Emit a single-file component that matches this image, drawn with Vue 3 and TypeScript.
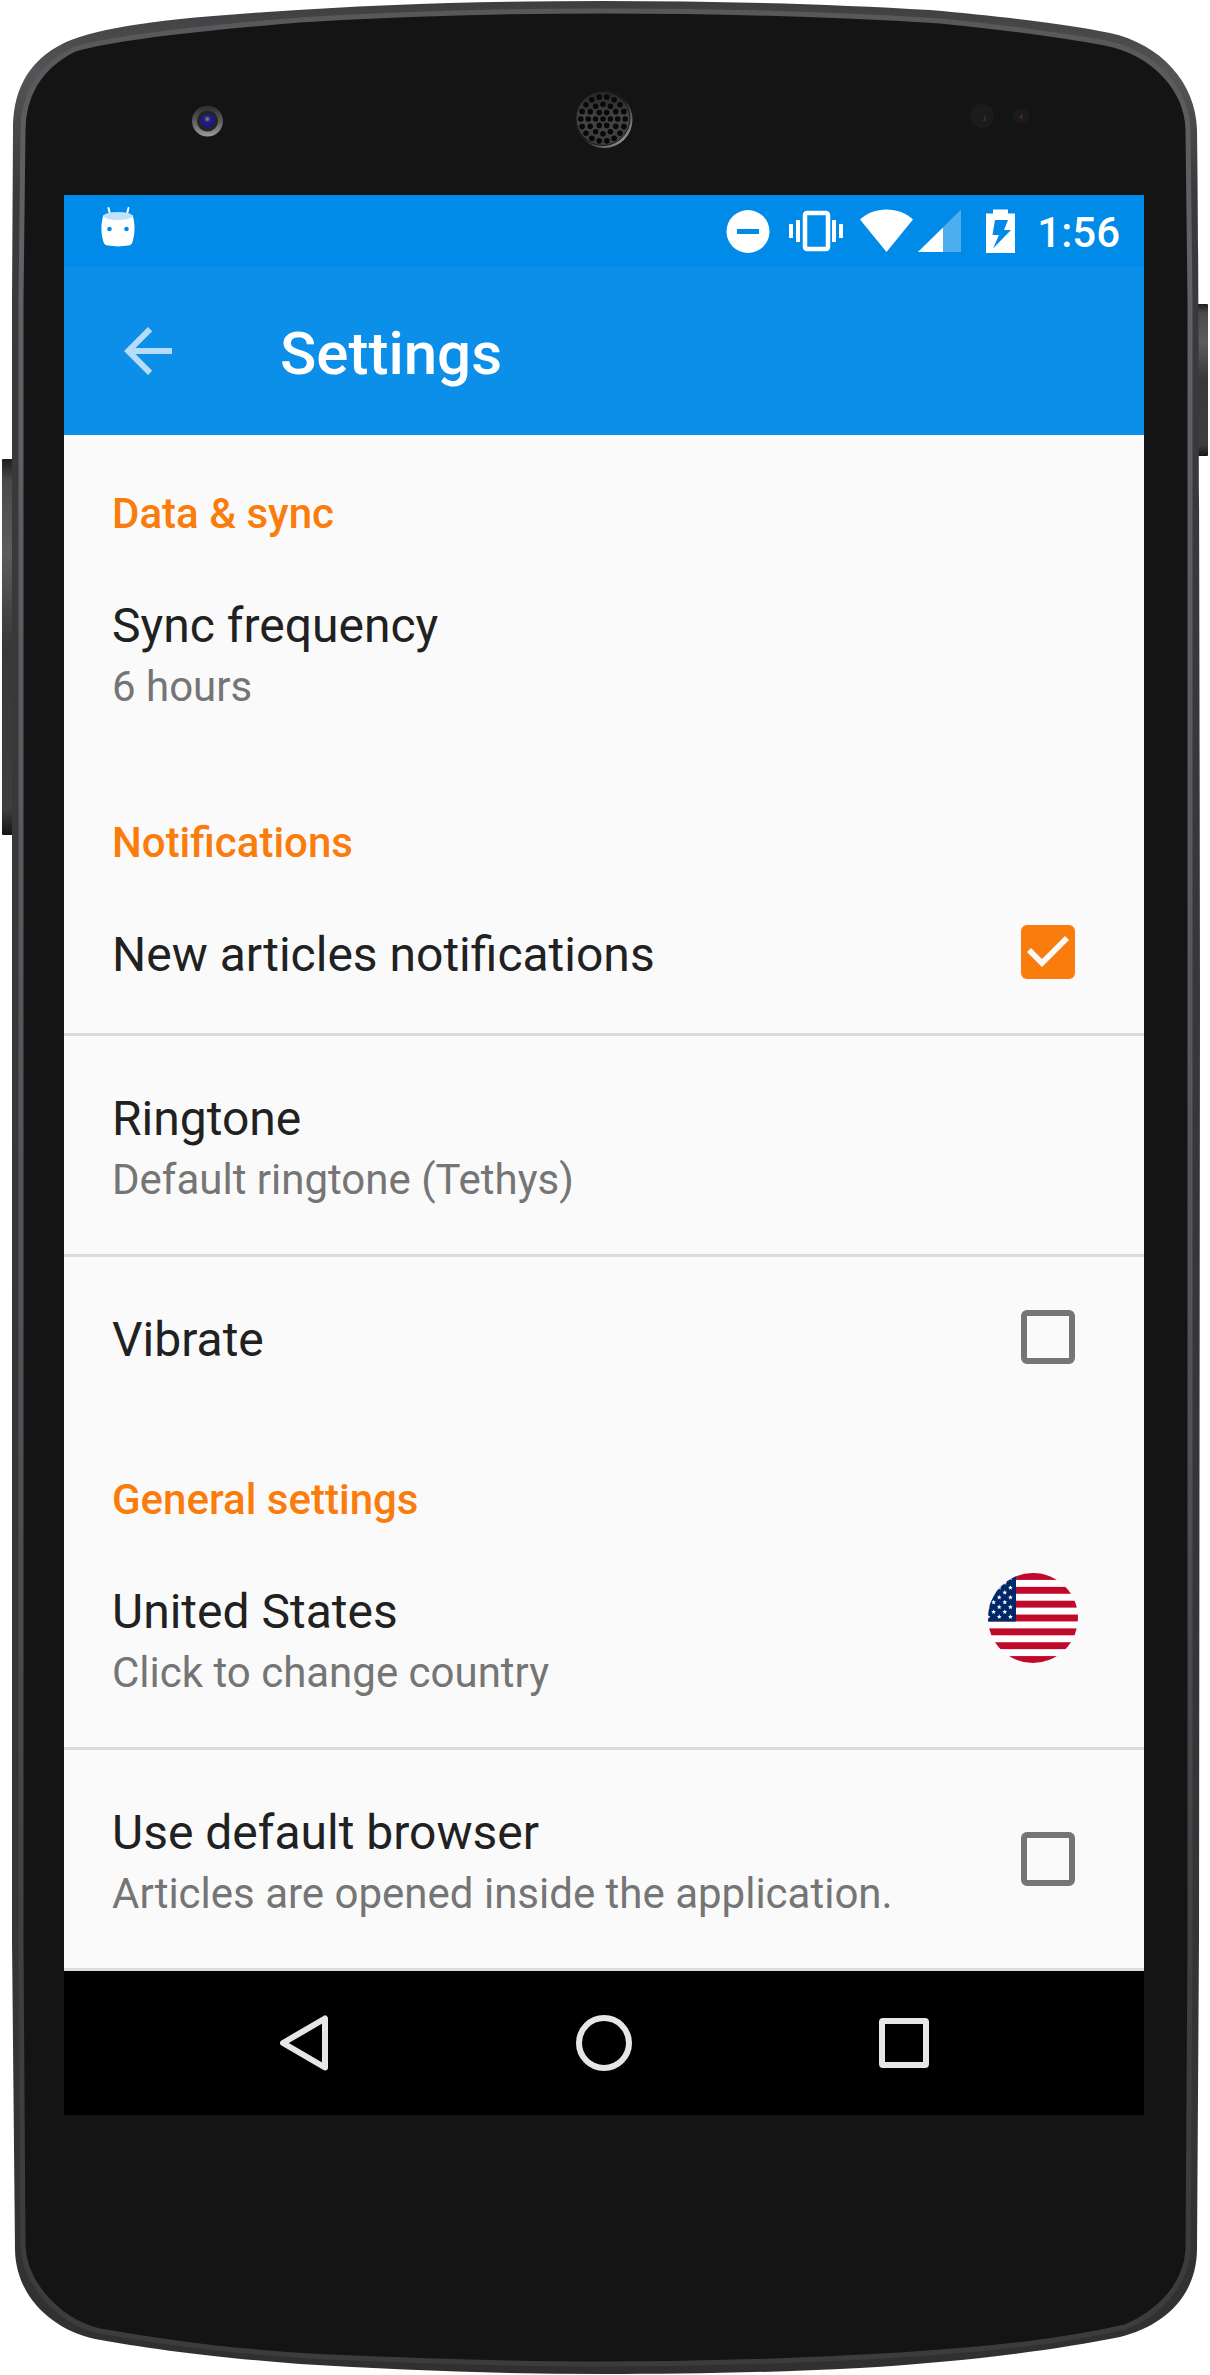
<script setup lang="ts">
import { reactive } from 'vue'

type RowKind = 'plain' | 'toggle' | 'country'

interface SettingRow {
  id: string
  kind: RowKind
  title: string
  summary?: string
}

interface SettingGroup {
  heading: string
  rows: SettingRow[]
}

const groups: SettingGroup[] = [
  {
    heading: 'Data & sync',
    rows: [{ id: 'sync', kind: 'plain', title: 'Sync frequency', summary: '6 hours' }],
  },
  {
    heading: 'Notifications',
    rows: [
      { id: 'articles', kind: 'toggle', title: 'New articles notifications' },
      { id: 'ringtone', kind: 'plain', title: 'Ringtone', summary: 'Default ringtone (Tethys)' },
      { id: 'vibrate', kind: 'toggle', title: 'Vibrate' },
    ],
  },
  {
    heading: 'General settings',
    rows: [
      { id: 'country', kind: 'country', title: 'United States', summary: 'Click to change country' },
      {
        id: 'browser',
        kind: 'toggle',
        title: 'Use default browser',
        summary: 'Articles are opened inside the application.',
      },
    ],
  },
]

const checked = reactive<Record<string, boolean>>({ articles: true, vibrate: false, browser: false })

interface Point {
  x: number
  y: number
}

// Speaker grille: one hole in the middle and three rings around it.
const holes: Point[] = [{ x: 603, y: 119 }]
const rings = [
  { count: 6, radius: 7.4 },
  { count: 12, radius: 14.7 },
  { count: 18, radius: 22.2 },
]
for (const ring of rings) {
  for (let i = 0; i < ring.count; i++) {
    const a = (i / ring.count) * Math.PI * 2
    holes.push({ x: 603 + Math.cos(a) * ring.radius, y: 119 + Math.sin(a) * ring.radius })
  }
}

function starPath(cx: number, cy: number, r: number): string {
  const pts: string[] = []
  for (let i = 0; i < 10; i++) {
    const a = (i / 10) * Math.PI * 2 - Math.PI / 2
    const d = i % 2 === 0 ? r : r * 0.45
    pts.push(`${(cx + Math.cos(a) * d).toFixed(2)},${(cy + Math.sin(a) * d).toFixed(2)}`)
  }
  return `M${pts.join('L')}Z`
}

const stars: string[] = []
for (let row = 0; row < 9; row++) {
  for (let col = 0; col < 3; col++) {
    const x = (row % 2 === 0 ? 22.4 : 16.8) - col * 11.2
    stars.push(starPath(x, 5 + row * 4.85, 2.5))
  }
}
const stripes = [0, 2, 4, 6, 8, 10, 12].map((n) => (n * 90) / 13)
</script>

<template>
  <div class="phone">
    <svg class="frame" viewBox="0 0 1210 2375" preserveAspectRatio="none" aria-hidden="true">
      <defs>
        <linearGradient id="edge" x1="0" y1="0" x2="0" y2="1">
          <stop offset="0" stop-color="#3e3e40" />
          <stop offset="0.03" stop-color="#555557" />
          <stop offset="0.08" stop-color="#3a3a3c" />
          <stop offset="0.9" stop-color="#343436" />
          <stop offset="1" stop-color="#303032" />
        </linearGradient>
        <linearGradient id="rim" x1="0" y1="0" x2="0" y2="1">
          <stop offset="0" stop-color="#58585b" />
          <stop offset="0.1" stop-color="#626266" />
          <stop offset="0.6" stop-color="#525256" />
          <stop offset="0.85" stop-color="#3e3e41" />
          <stop offset="1" stop-color="#3c3c3e" />
        </linearGradient>
        <linearGradient id="key" x1="0" y1="0" x2="0" y2="1">
          <stop offset="0" stop-color="#1e1e1e" />
          <stop offset="0.06" stop-color="#4a4a4a" />
          <stop offset="0.25" stop-color="#5c5c5c" />
          <stop offset="0.5" stop-color="#383838" />
          <stop offset="0.93" stop-color="#3e3e3e" />
          <stop offset="1" stop-color="#151515" />
        </linearGradient>
        <linearGradient id="lens-ring" x1="0" y1="0" x2="0" y2="1">
          <stop offset="0" stop-color="#2b2b2b" />
          <stop offset="0.5" stop-color="#5c5c5c" />
          <stop offset="1" stop-color="#9a9a98" />
        </linearGradient>
        <radialGradient id="lens" cx="0.45" cy="0.4" r="0.6">
          <stop offset="0" stop-color="#7f8ea3" />
          <stop offset="0.4" stop-color="#20245a" />
          <stop offset="0.75" stop-color="#1a13b4" />
          <stop offset="1" stop-color="#241848" />
        </radialGradient>
        <linearGradient id="grille-rim" x1="0" y1="0" x2="1" y2="1">
          <stop offset="0.5" stop-color="#1c1c1c" />
          <stop offset="0.85" stop-color="#8c8c8c" />
          <stop offset="1" stop-color="#555555" />
        </linearGradient>
        <linearGradient id="grille" x1="0" y1="0" x2="0" y2="1">
          <stop offset="0" stop-color="#262626" />
          <stop offset="0.5" stop-color="#444446" />
          <stop offset="1" stop-color="#3c3c3e" />
        </linearGradient>
      </defs>
      <rect x="2" y="459" width="14" height="376" rx="1" fill="url(#key)" />
      <rect x="1194" y="304" width="14" height="152" rx="1" fill="url(#key)" />
      <path
        fill="url(#edge)"
        d="M12 300 L13 130 C13 95 24 62 66 42 C100 27 170 18 267 12 C380 4 490 1 603 1 C720 1 830 4 930 10 C1010 17 1070 25 1110 33 C1160 44 1196 82 1197 130 C1198 200 1199 300 1200 1000 L1199 1940 L1197 2250 C1196 2300 1160 2327 1120 2337 C1050 2351 960 2362 860 2368 C760 2373 680 2374 603 2374 C500 2374 400 2370 300 2364 C210 2357 150 2349 95 2339 C50 2329 16 2295 15 2250 L12 1940 Z"
      />
      <path
        fill="#141414"
        stroke="url(#rim)"
        stroke-width="5"
        d="M21 300 L23 130 C23 100 36 68 75 49 C110 39 190 29 300 20 C400 14 500 11 603 11 C720 11 830 14 940 21 C1010 28 1060 35 1105 43 C1155 53 1187 90 1188 130 L1190 300 L1190 1940 L1188 2250 C1186 2285 1158 2314 1125 2327 C1060 2342 990 2349 900 2355 C800 2361 710 2364 603 2364 C500 2364 400 2360 330 2357 C240 2352 180 2345 100 2331 C60 2322 24 2284 23 2245 L21 1940 Z"
      />
      <circle cx="207.500" cy="121" r="15.500" fill="url(#lens-ring)" />
      <circle cx="207.500" cy="121" r="10.500" fill="#242424" />
      <circle cx="208" cy="120.500" r="7" fill="url(#lens)" />
      <circle cx="604" cy="119.500" r="28.500" fill="url(#grille-rim)" />
      <circle cx="603" cy="118.500" r="27" fill="url(#grille)" stroke="#1a1a1a" />
      <circle v-for="(hole, i) in holes" :key="i" :cx="hole.x" :cy="hole.y" r="2.800" fill="#080808" />
      <circle cx="982" cy="116" r="12" fill="#1c1b1b" />
      <path d="M983 121l2-7 1 7z" fill="#4a2a1c" />
      <circle cx="1021" cy="116" r="8" fill="#1c1b1b" />
      <path d="M1019 118l3-5 1 6z" fill="#4a2a1c" />
    </svg>

    <main class="screen">
      <div class="status-bar">
        <svg class="icon-head" viewBox="0 0 36 44" aria-hidden="true">
          <path d="M8.500 3l2 8M28.500 3l-2 8" stroke="#fff" stroke-width="2" stroke-linecap="round" />
          <path
            fill="#fff"
            d="M3.500 10C1 17 .5 28 3.500 37c.6 2.300 2 3.200 4.500 3.600 6 1.100 14 1.100 20 0 2.500-.4 3.900-1.300 4.500-3.600 3-9 2.500-20 0-27z"
          />
          <ellipse cx="18" cy="11" rx="14.500" ry="4" fill="#c0e1f9" />
          <circle cx="9.500" cy="24" r="2.300" fill="#018be8" />
          <circle cx="26.500" cy="24" r="2.300" fill="#018be8" />
        </svg>
        <div class="status-icons">
          <svg width="62" height="44" viewBox="0 0 62 44" aria-hidden="true">
            <circle cx="22" cy="22.500" r="21.500" fill="#fff" />
            <rect x="11" y="20" width="22" height="5" fill="#018be8" />
          </svg>
          <svg width="72" height="44" viewBox="0 0 72 44" aria-hidden="true">
            <rect x="17" y="4" width="23" height="36" rx="2" fill="none" stroke="#fff" stroke-width="4.500" />
            <path d="M1 15h4v14H1zM8 11h4v22H8zM44 11h4v22h-4zM51 15h4v14h-4z" fill="#fff" />
          </svg>
          <svg width="58" height="44" viewBox="0 0 58 44" aria-hidden="true">
            <path d="M26.500 43L0 10.500C7 4 16 .5 26.500 .5S46 4 53 10.500z" fill="#fff" />
          </svg>
          <svg width="68" height="44" viewBox="0 0 68 44" aria-hidden="true">
            <path d="M0 43L43 .5V43z" fill="#fff" opacity="0.300" />
            <path d="M0 43L25 18.500V43z" fill="#fff" />
          </svg>
          <svg width="48" height="44" viewBox="0 0 48 44" aria-hidden="true">
            <path
              fill="#fff"
              fill-rule="evenodd"
              d="M7 .5h15v4h7V44H0V4.500h7zM9 11L6.500 26H13L7 39.500 25 21h-7l4-10z"
            />
          </svg>
        </div>
        <time class="clock">1:56</time>
      </div>

      <header class="toolbar">
        <button class="back" type="button" aria-label="Back">
          <svg width="72" height="72" viewBox="0 0 24 24" aria-hidden="true">
            <path
              fill="#b6dcf8"
              d="M20 11H7.830l5.590-5.590L12 4l-8 8 8 8 1.410-1.410L7.830 13H20z"
            />
          </svg>
        </button>
        <h1>Settings</h1>
      </header>

      <section v-for="group in groups" :key="group.heading" class="group">
        <h2>{{ group.heading }}</h2>
        <component
          :is="row.kind === 'toggle' ? 'label' : 'button'"
          v-for="row in group.rows"
          :key="row.id"
          class="row"
          :for="row.kind === 'toggle' ? row.id : undefined"
          :type="row.kind === 'toggle' ? undefined : 'button'"
        >
          <span class="texts">
            <span class="title">{{ row.title }}</span>
            <span v-if="row.summary" class="summary">{{ row.summary }}</span>
          </span>
          <input v-if="row.kind === 'toggle'" :id="row.id" v-model="checked[row.id]" type="checkbox" />
          <svg v-if="row.kind === 'country'" class="flag" viewBox="0 0 90 90" aria-hidden="true">
            <clipPath id="disc"><circle cx="45" cy="45" r="45" /></clipPath>
            <g clip-path="url(#disc)">
              <rect width="90" height="90" fill="#fff" />
              <rect v-for="y in stripes" :key="y" :y="y" width="90" height="6.920" fill="#bf0a2b" />
              <rect width="28" height="48.500" fill="#002868" />
              <path v-for="(d, i) in stars" :key="i" :d="d" fill="#fff" />
            </g>
          </svg>
        </component>
      </section>

      <nav class="nav-bar" aria-label="System">
        <button type="button" aria-label="Back">
          <svg width="60" height="60" viewBox="0 0 60 60" aria-hidden="true">
            <path d="M9 30L51 5.500V54.500z" />
          </svg>
        </button>
        <button type="button" aria-label="Home">
          <svg width="60" height="60" viewBox="0 0 60 60" aria-hidden="true">
            <circle cx="30" cy="30" r="25" />
          </svg>
        </button>
        <button type="button" aria-label="Recent apps">
          <svg width="60" height="60" viewBox="0 0 60 60" aria-hidden="true">
            <rect x="8" y="8" width="44" height="44" rx="1" />
          </svg>
        </button>
      </nav>
    </main>
  </div>
</template>

<style>
body {
  background: #fff;
}
</style>

<style scoped>
.phone {
  position: relative;
  box-sizing: border-box;
  padding: 195px 66px 260px 64px;
  font-family: Roboto, 'Liberation Sans', sans-serif;
}

.frame {
  position: absolute;
  inset: 0;
  width: 100%;
  height: 100%;
}

.screen {
  position: relative;
  background: #fafafa;
}

button {
  margin: 0;
  padding: 0;
  border: 0;
  background: none;
  font: inherit;
  color: inherit;
  text-align: left;
  cursor: pointer;
}

svg {
  display: block;
}

.status-bar {
  display: flex;
  align-items: center;
  height: 72px;
  padding: 0 24px 0 36px;
  background: #018be8;
  color: #fff;
}

.icon-head {
  width: 36px;
  height: 44px;
  margin-bottom: 8px;
}

.status-icons {
  display: flex;
  margin-left: auto;
}

.clock {
  padding: 4px 0 0 3px;
  font-size: 42px;
  line-height: 48px;
  font-weight: 500;
}

.toolbar {
  display: flex;
  align-items: center;
  height: 168px;
  padding: 0 48px;
  gap: 96px;
  background: #0b8fe8;
  color: #fff;
}

h1 {
  margin: 0;
  padding-top: 6px;
  font-size: 60px;
  line-height: 72px;
  font-weight: 500;
}

h2 {
  margin: 0;
  padding: 54px 48px 4px;
  font-size: 42px;
  line-height: 50px;
  font-weight: 500;
  color: #fa7c0d;
}

.row {
  display: flex;
  align-items: center;
  box-sizing: border-box;
  width: 100%;
  min-height: 164px;
  padding: 0 69px 1px 48px;
  border-bottom: 3px solid #dcdcdc;
  cursor: pointer;
}

.row:last-child {
  border-bottom-color: transparent;
}

.group:nth-last-child(2) .row:last-child {
  border-bottom-color: #dcdcdc;
}

.texts {
  flex: 1;
  align-self: flex-start;
  display: flex;
  flex-direction: column;
  padding: 52px 0 43px;
}

.title {
  font-size: 48px;
  line-height: 62px;
  color: #212121;
}

.summary {
  font-size: 42px;
  line-height: 60px;
  color: #757575;
}

input[type='checkbox'] {
  appearance: none;
  flex: none;
  width: 54px;
  height: 54px;
  margin: 0;
  border: 6px solid #757575;
  border-radius: 6px;
}

input[type='checkbox']:checked {
  border: 0;
  background: #fa7c0d;
}

input[type='checkbox']:checked::after {
  content: '';
  display: block;
  width: 54px;
  height: 54px;
  background: #fafafa;
  clip-path: polygon(21px 42px, 6px 27px, 10px 23px, 21px 34px, 44px 11px, 48px 15px);
}

.flag {
  flex: none;
  align-self: flex-start;
  width: 90px;
  height: 90px;
  margin: 44px -3px 0 0;
}

.nav-bar {
  display: flex;
  justify-content: center;
  height: 144px;
  background: #000;
}

.nav-bar button {
  flex: 0 1 300px;
  display: flex;
  align-items: center;
  justify-content: center;
}

.nav-bar svg {
  fill: none;
  stroke: #e6e6e6;
  stroke-width: 6px;
  stroke-linejoin: round;
}
</style>
